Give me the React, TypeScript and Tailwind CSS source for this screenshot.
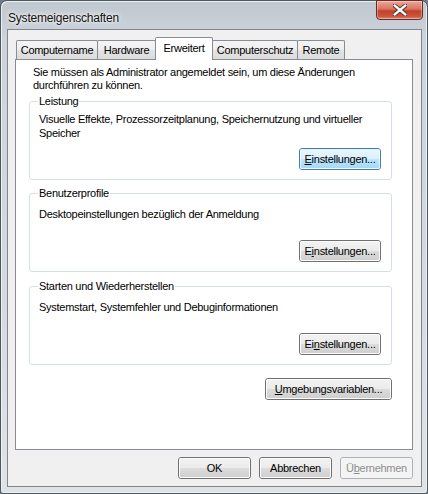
import React from "react";

function Btn({
  children,
  className = "",
  variant = "normal",
}: {
  children: React.ReactNode;
  className?: string;
  variant?: "normal" | "focus" | "disabled";
}) {
  const outer =
    variant === "focus"
      ? "border-[#3c7fb1]"
      : variant === "disabled"
      ? "border-[#adb2b5]"
      : "border-[#707070]";
  const inner =
    variant === "focus"
      ? "bg-[linear-gradient(to_bottom,#eaf6fd_0%,#d9f0fc_50%,#bee6fd_50%,#a7d9f5_100%)] border-[#fcfcfc]/70"
      : variant === "disabled"
      ? "bg-[#f4f4f4] border-[#f4f4f4]"
      : "bg-[linear-gradient(to_bottom,#f2f2f2_0%,#ebebeb_50%,#dddddd_50%,#cfcfcf_100%)] border-[#fcfcfc]";
  return (
    <div
      className={`h-[22px] rounded-[3px] border ${outer} flex ${className}`}
    >
      <div
        className={`flex-1 rounded-[2px] border ${inner} flex items-center justify-center ${
          variant === "disabled" ? "text-[#8d8d8d]" : "text-black"
        }`}
      >
        {children}
      </div>
    </div>
  );
}

function Group({
  title,
  text,
  textPad,
  btn,
  focus,
}: {
  title: string;
  text: React.ReactNode;
  textPad: string;
  btn: React.ReactNode;
  focus?: boolean;
}) {
  return (
    <div className="relative ml-[13px] w-[363px] h-[79px] rounded-[3px] border border-[#d5dfe5] flex flex-col">
      <span className="absolute left-[8px] -top-[8px] bg-white px-[1px] leading-[14px]">
        {title}
      </span>
      <div className={`pl-[9px] leading-[14px] ${textPad}`}>{text}</div>
      <div className="mt-auto mb-[9px] mr-[10px] self-end">
        <Btn className="w-[82px]" variant={focus ? "focus" : "normal"}>
          {btn}
        </Btn>
      </div>
    </div>
  );
}

export default function App() {
  const tabBase =
    "h-[19px] -ml-px first:ml-0 border border-b-0 border-[#898c95] rounded-t-[2px] bg-[linear-gradient(to_bottom,#f4f4f4,#eeeeee_50%,#e3e3e3_50%,#dcdcdc)] flex items-center justify-center";
  return (
    <div className="w-[428px] h-[494px] bg-[#6f7b86] font-['Liberation_Sans',Arial,sans-serif] text-[11px] tracking-[-0.27px] text-black select-none">
      <div className="w-full h-full rounded-t-[7px] rounded-b-[3px] border border-[#4d5760] bg-[linear-gradient(to_bottom,#c0c8d0_0%,#cdd3d9_8%,#d6dadf_60%,#e0e3e6_100%)] flex flex-col pl-[6px] pr-[5px] pb-[6px] shadow-[inset_1px_1px_0_#eef1f4,inset_-1px_-1px_0_#eef1f4]">
        {/* title bar */}
        <div className="h-[28px] flex items-start justify-between">
          <div className="pt-[8px] pl-[1px] text-[12px] tracking-[-0.2px] text-[#111] [text-shadow:0_0_6px_#ffffff,0_0_3px_#ffffff]">
            Systemeigenschaften
          </div>
          <div className="-mt-px mr-[-1px] w-[47px] h-[20px] rounded-b-[4px] border border-[#6d2a22] bg-[linear-gradient(to_bottom,#e9a99b_0%,#d8735f_45%,#c4412a_55%,#c9553e_85%,#e08a6f_100%)] shadow-[inset_0_0_0_1px_rgba(255,255,255,0.35)] flex items-center justify-center">
            <svg width="14" height="12" viewBox="0 0 14 12">
              <path
                d="M1.5 1.5 L12.5 10.5 M12.5 1.5 L1.5 10.5"
                stroke="#5a3a35"
                strokeWidth="4.2"
                strokeLinecap="round"
              />
              <path
                d="M1.8 1.7 L12.2 10.3 M12.2 1.7 L1.8 10.3"
                stroke="#ffffff"
                strokeWidth="2.4"
                strokeLinecap="square"
              />
            </svg>
          </div>
        </div>
        {/* client */}
        <div className="flex-1 border border-[#7e8791] bg-[#f0f0f0] flex flex-col">
          {/* tabs */}
          <div className="h-[29px] pl-[8px] flex items-end">
            <div className={`${tabBase} w-[82px]`}>Computername</div>
            <div className={`${tabBase} w-[59px]`}>Hardware</div>
            <div className="relative z-10 -ml-px -mb-px h-[23px] w-[58px] border border-b-0 border-[#898c95] rounded-t-[2px] bg-white flex items-start justify-center pt-[2px]">
              Erweitert
            </div>
            <div className={`${tabBase} w-[86px]`}>Computerschutz</div>
            <div className={`${tabBase} w-[48px]`}>Remote</div>
          </div>
          {/* panel */}
          <div className="ml-[7px] w-[398px] h-[391px] border border-[#898c95] bg-white flex flex-col">
            <div className="pl-[17px] pt-[6px] leading-[13px]">
              Sie müssen als Administrator angemeldet sein, um diese Änderungen
              <br />
              durchführen zu können.
            </div>
            <div className="mt-[9px]">
              <Group
                title="Leistung"
                textPad="pt-[10px]"
                text={
                  <>
                    Visuelle Effekte, Prozessorzeitplanung, Speichernutzung und virtueller
                    <br />
                    Speicher
                  </>
                }
                btn={
                  <span>
                    <u>E</u>instellungen...
                  </span>
                }
                focus
              />
            </div>
            <div className="mt-[13px]">
              <Group
                title="Benutzerprofile"
                textPad="pt-[13px]"
                text="Desktopeinstellungen bezüglich der Anmeldung"
                btn={
                  <span>
                    E<u>i</u>nstellungen...
                  </span>
                }
              />
            </div>
            <div className="mt-[14px]">
              <Group
                title="Starten und Wiederherstellen"
                textPad="pt-[13px]"
                text="Systemstart, Systemfehler und Debuginformationen"
                btn={
                  <span>
                    Ei<u>n</u>stellungen...
                  </span>
                }
              />
            </div>
            <div className="mt-[13px] flex justify-end mr-[20px]">
              <Btn className="w-[127px]">
                <span>
                  <u>U</u>mgebungsvariablen...
                </span>
              </Btn>
            </div>
          </div>
          {/* bottom buttons */}
          <div className="mt-[7px] ml-[7px] w-[398px] flex justify-end gap-[8px]">
            <Btn className="w-[73px]">OK</Btn>
            <Btn className="w-[73px]">Abbrechen</Btn>
            <Btn className="w-[73px]" variant="disabled">
              <span>
                Ü<u>b</u>ernehmen
              </span>
            </Btn>
          </div>
        </div>
      </div>
    </div>
  );
}
